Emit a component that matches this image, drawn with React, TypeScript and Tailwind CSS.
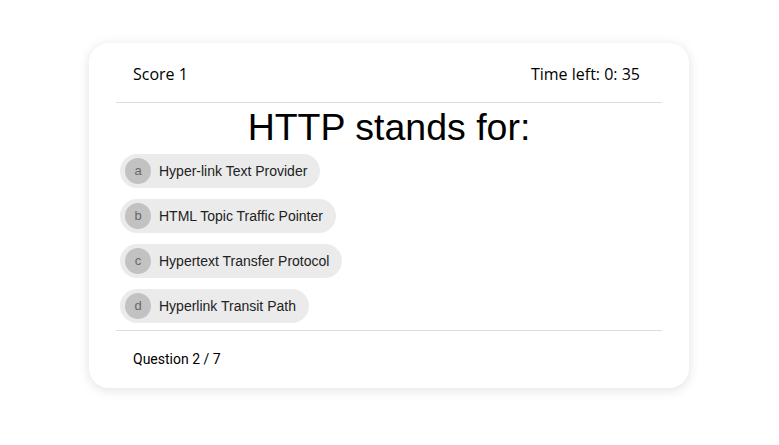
import React from "react";

const options = [
  { key: "a", text: "Hyper-link Text Provider" },
  { key: "b", text: "HTML Topic Traffic Pointer" },
  { key: "c", text: "Hypertext Transfer Protocol" },
  { key: "d", text: "Hyperlink Transit Path" },
];

function App() {
  return (
    <div className="min-h-screen bg-white flex pl-[89px] pt-[43px]">
      <div className="w-[600px] h-[345px] bg-white rounded-[20px] shadow-[0_2px_12px_rgba(0,0,0,0.12)] px-[27px] flex flex-col">
        <div className="flex justify-between items-center h-[59px] px-[17px] pt-[2px] font-['Open_Sans',sans-serif] text-[16px] text-black">
          <span>Score 1</span>
          <span className="mr-[5px]">Time left: 0: 35</span>
        </div>
        <div className="border-t border-[#dddddd]"></div>
        <div className="text-center font-['Liberation_Sans',Arial,sans-serif] text-[37.5px] leading-[48px] text-black">
          HTTP stands for:
        </div>
        <div className="flex flex-col gap-[11px] mt-[3px] pl-[4px] pb-[7px]">
          {options.map((o) => (
            <div
              key={o.key}
              className="self-start flex items-center h-[34px] rounded-full bg-[#ebebeb] pl-[5px] pr-[13px] font-['Liberation_Sans',Arial,sans-serif] text-[14px] text-[#222]"
            >
              <span className="w-[26px] h-[26px] rounded-full bg-[#c2c2c2] text-[#666] flex items-center justify-center text-[13px]">
                {o.key}
              </span>
              <span className="ml-[8px]">{o.text}</span>
            </div>
          ))}
        </div>
        <div className="border-t border-[#dddddd]"></div>
        <div className="flex-1 flex items-center px-[17px] font-['Roboto',sans-serif] text-[14px] text-black">
          Question 2 / 7
        </div>
      </div>
    </div>
  );
}

export default App;
